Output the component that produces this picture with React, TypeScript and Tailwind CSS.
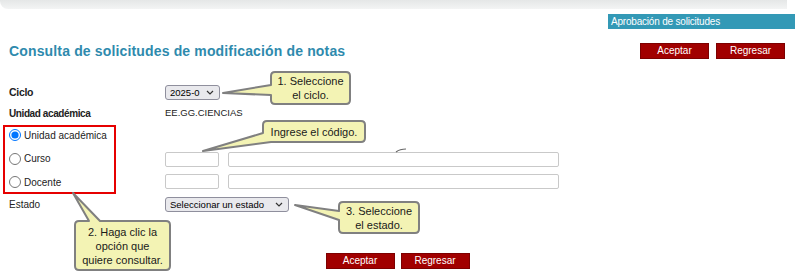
import React from 'react';

const Chevron: React.FC = () => (
    <svg width="8" height="5" viewBox="0 0 8 5" className="absolute right-[6px] top-[5px] pointer-events-none">
        <path d="M1 1 L4 4 L7 1" fill="none" stroke="#333" strokeWidth="1.2" />
    </svg>
);

const RedButton: React.FC<{ label: string }> = ({ label }) => (
    <button className="w-[69px] h-[16px] bg-[#a10000] border border-[#7d0000] text-white text-[10px] leading-[14px] text-center">
        {label}
    </button>
);

const Callout: React.FC<{ className: string; lines: string[] }> = ({ className, lines }) => (
    <div className={`absolute flex flex-col items-center justify-center text-[11px] leading-[14px] text-[#1a1a1a] ${className}`}>
        {lines.map((l, i) => (
            <span key={i}>{l}</span>
        ))}
    </div>
);

export default function App() {
    const fill = '#f3f3b4';
    const stroke = '#808080';

    return (
        <div className="relative w-[795px] h-[275px] overflow-hidden bg-white font-['Liberation_Sans',Arial,sans-serif] text-[#222]">
            <div className="h-[9px] mr-[8px] rounded-bl-[8px] bg-gradient-to-b from-[#e5e7e7] to-[#f3f4f4]" />

            <div className="mt-[5px] flex justify-end">
                <div className="w-[187px] h-[15px] bg-[#3399b6] text-white text-[10px] leading-[15px] pl-[3px] tracking-[-0.2px]">
                    Aprobación de solicitudes
                </div>
            </div>

            <div className="mt-[14px] h-[16px] flex items-center justify-between pl-[9px] pr-[10px]">
                <h1 className="text-[14px] font-bold text-[#2e8aad] tracking-[0.15px] leading-[16px]">
                    Consulta de solicitudes de modificación de notas
                </h1>
                <div className="flex gap-[7px]">
                    <RedButton label="Aceptar" />
                    <RedButton label="Regresar" />
                </div>
            </div>

            <div className="mt-[26px] h-[15px] flex items-center">
                <span className="w-[165px] pl-[9px] text-[10.5px] font-bold tracking-[-0.3px]">Ciclo</span>
                <div className="relative flex">
                    <select className="block appearance-none w-[55px] h-[15px] border border-[#8f8f9d] rounded-[3px] bg-[#e9e9ed] text-[9.5px] leading-[13px] pl-[4px] text-black">
                        <option>2025-0</option>
                    </select>
                    <Chevron />
                </div>
            </div>

            <div className="mt-[6px] h-[15px] flex items-center">
                <span className="w-[165px] pl-[9px] text-[10px] font-bold tracking-[-0.4px]">Unidad académica</span>
                <span className="text-[9.5px]">EE.GG.CIENCIAS</span>
            </div>

            <div className="mt-[4px] flex">
                <div className="ml-[3px] w-[113px] h-[69px] border-2 border-[#e60000] pl-[4px] flex flex-col gap-[7.5px]">
                    {['Unidad académica', 'Curso', 'Docente'].map((opt, i) => (
                        <label key={opt} className="h-[16px] flex items-center gap-[3px] text-[10px]">
                            <input type="radio" name="tipo" defaultChecked={i === 0} className="m-0 w-[12px] h-[12px]" />
                            {opt}
                        </label>
                    ))}
                </div>
                <div className="ml-[49px] pt-[27px] flex flex-col gap-[7px]">
                    {[0, 1].map((r) => (
                        <div key={r} className="flex gap-[9px]">
                            <input className="w-[54px] h-[15px] border border-[#c9c9c9] rounded-[2px] bg-white" />
                            <input className="w-[331px] h-[15px] border border-[#c9c9c9] rounded-[2px] bg-white" />
                        </div>
                    ))}
                </div>
            </div>

            <div className="mt-[3px] h-[15px] flex items-center">
                <span className="w-[165px] pl-[9px] text-[10px]">Estado</span>
                <div className="relative flex">
                    <select className="block appearance-none w-[124px] h-[15px] border border-[#8f8f9d] rounded-[3px] bg-[#e9e9ed] text-[9.5px] leading-[13px] pl-[4px] text-black">
                        <option>Seleccionar un estado</option>
                    </select>
                    <Chevron />
                </div>
            </div>

            <div className="mt-[41px] flex justify-center gap-[6px]">
                <RedButton label="Aceptar" />
                <RedButton label="Regresar" />
            </div>

            {/* callouts */}
            <svg width="795" height="275" className="absolute left-0 top-0 pointer-events-none">
                <g fill={fill} stroke={stroke} strokeWidth="2" strokeLinejoin="round">
                    <path d="M275 72 H346 Q350 72 350 76 V100 Q350 104 346 104 H275 Q271 104 271 100 V95 L223 93 L271 85 V76 Q271 72 275 72 Z" />
                    <path d="M267 121 H361 Q365 121 365 125 V138 Q365 142 361 142 H271 L203 151 L263 133 V125 Q263 121 267 121 Z" />
                    <path d="M343 202 H415 Q419 202 419 206 V229 Q419 233 415 233 H343 Q339 233 339 229 V220 L295 205 L339 211 V206 Q339 202 343 202 Z" />
                    <path d="M79 221 H89 L73 193 L100 221 H166 Q170 221 170 225 V266 Q170 270 166 270 H79 Q75 270 75 266 V225 Q75 221 79 221 Z" />
                </g>
                <path d="M396 152 Q400 149 406 149" fill="none" stroke="#666" strokeWidth="1.2" />
            </svg>
            <Callout className="left-[271px] top-[72px] w-[79px] h-[32px]" lines={['1. Seleccione', 'el ciclo.']} />
            <Callout className="left-[263px] top-[121px] w-[102px] h-[21px]" lines={['Ingrese el código.']} />
            <Callout className="left-[339px] top-[202px] w-[80px] h-[31px]" lines={['3. Seleccione', 'el estado.']} />
            <Callout className="left-[75px] top-[221px] w-[95px] h-[49px]" lines={['2. Haga clic la', 'opción que', 'quiere consultar.']} />
        </div>
    );
}
